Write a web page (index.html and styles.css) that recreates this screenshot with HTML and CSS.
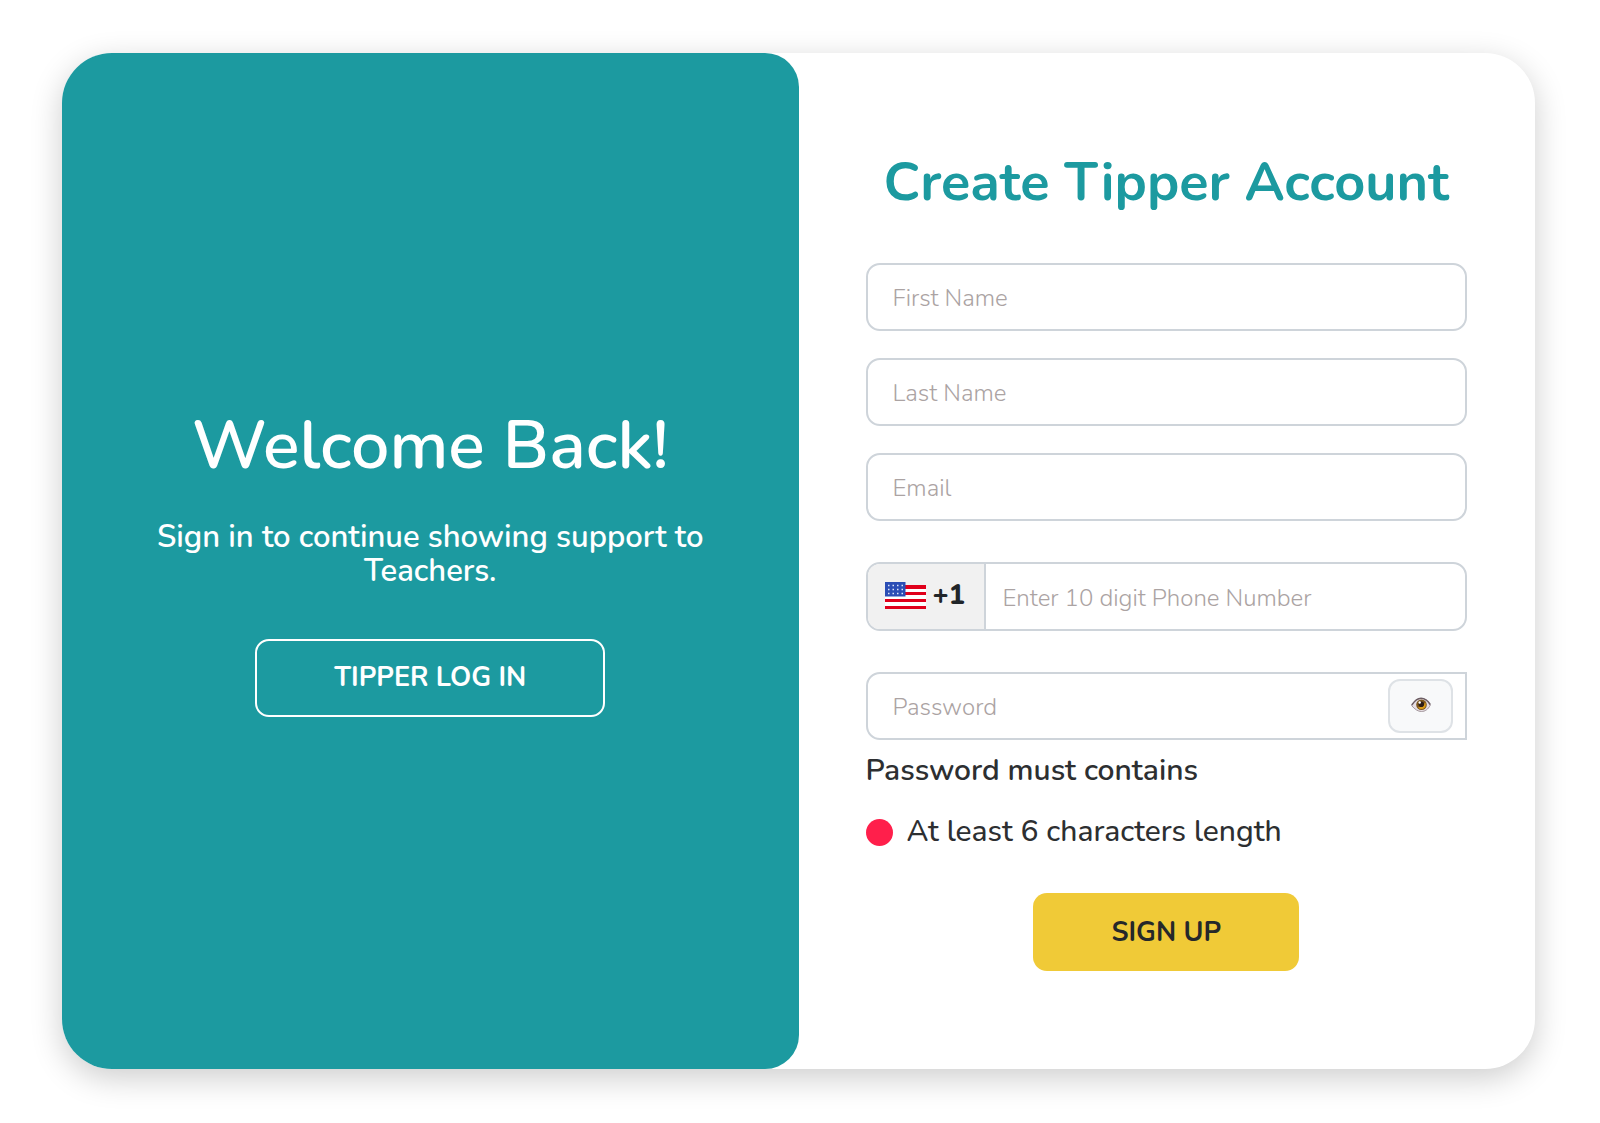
FILE: index.html
```html
<!DOCTYPE html>
<html lang="en">
<head>
<meta charset="utf-8">
<meta name="viewport" content="width=device-width, initial-scale=1">
<title>Create Tipper Account</title>
<link rel="stylesheet" href="styles.css">
</head>
<body>
<main class="card">
  <section class="welcome">
    <h1 class="welcome-title">Welcome Back!</h1>
    <p class="welcome-text">Sign in to continue showing support to Teachers.</p>
    <button class="button button-outline" type="button">TIPPER LOG IN</button>
  </section>
  <section class="signup">
    <h2 class="signup-title">Create Tipper Account</h2>
    <form class="form">
      <div class="names">
        <input class="field" type="text" placeholder="First Name" aria-label="First Name">
        <input class="field" type="text" placeholder="Last Name" aria-label="Last Name">
        <input class="field" type="email" placeholder="Email" aria-label="Email">
      </div>
      <div class="field-group phone">
        <label class="prefix" for="phone">
          <svg class="flag" viewBox="0 0 41 27" aria-hidden="true">
            <path fill="#fff" d="M0 0h41v27H0z"/>
            <path fill="#e0001b" d="M20 3h21v4H20zM20 10h21v3H20zM0 17h41v3H0zM0 24h41v3H0z"/>
            <path fill="#f1f1f1" d="M20 0h21v3H20z"/>
            <path fill="#2b4eb5" d="M0 0h20.500v14.500H0z"/>
            <g stroke="#dfe6fa" stroke-width="1.500" stroke-dasharray="1.500 3">
              <path d="M3 3.500h15M3 7.500h15M3 11.500h15"/>
            </g>
          </svg>
          <span>+1</span>
        </label>
        <input class="group-input" id="phone" type="tel" placeholder="Enter 10 digit Phone Number">
      </div>
      <div class="field-group password">
        <input class="group-input" type="password" placeholder="Password" aria-label="Password">
        <button class="reveal" type="button" aria-label="Show password">
          <svg class="eye" viewBox="0 0 20 16" aria-hidden="true">
            <path fill="#e6dee3" stroke="#a3969c" stroke-width="1" d="M.6 8.600C3.500 3.500 6.500 1.500 10 1.500s7 2 9.400 6.500C17 12.500 14 14.500 10.500 14.500S4 12.500.6 8.600z"/>
            <circle cx="10.500" cy="7.800" r="5.300" fill="#7d571d"/>
            <path fill="#d99a16" d="M7 10.500c2 2.400 6 2.200 7.500-1 .5-1.500.3-3-.3-4l-3 4z"/>
            <circle cx="10.300" cy="7.300" r="2.800" fill="#2c1c14"/>
            <circle cx="8.700" cy="5.500" r="1.200" fill="#fff"/>
            <path fill="none" stroke="#6d5e64" stroke-width="1.500" d="M.8 8C4 3.200 6.800 1.300 10 1.300s6.600 1.900 9.200 6.200"/>
          </svg>
        </button>
      </div>
      <p class="rules-title">Password must contains</p>
      <ul class="rules">
        <li class="rule"><span class="dot"></span>At least 6 characters length</li>
      </ul>
      <button class="button button-solid" type="submit">SIGN UP</button>
    </form>
  </section>
</main>
</body>
</html>
```
FILE: styles.css
```css
* { box-sizing: border-box; }

body {
  margin: 0;
  padding: 53px 65px 54px 62px;
  min-height: 100vh;
  display: flex;
  background: #fff;
  color: #2d2f31;
  font-family: Nunito, Lato, sans-serif;
}

h1, h2, p, ul { margin: 0; padding: 0; }
input, button { font: inherit; }

.card {
  flex: 1;
  display: grid;
  grid-template-columns: 1fr 1fr;
  border-radius: 50px;
  background: #fff;
  box-shadow: 0 9px 32px rgba(0, 0, 0, 0.2);
}

.welcome {
  display: flex;
  flex-direction: column;
  align-items: center;
  justify-content: center;
  padding: 0 68px 2px;
  border-radius: 50px 34px 34px 50px;
  background: #1c9aa0;
  color: #fff;
  text-align: center;
}

.welcome-title {
  font-size: 68px;
  line-height: 84px;
  font-weight: 600;
}

.welcome-text {
  margin: 32px 0 51px;
  font-size: 31px;
  line-height: 34px;
  font-weight: 600;
}

.button {
  height: 78px;
  border-radius: 14px;
  font-size: 27px;
  font-weight: 700;
  cursor: pointer;
}

.button-outline {
  width: 350px;
  border: 2px solid #fff;
  background: transparent;
  color: #fff;
}

.button-solid {
  align-self: center;
  width: 266px;
  margin-top: 42px;
  border: 0;
  background: #f0ca37;
  color: #25282a;
}

.signup {
  padding: 95px 68px 95px 67px;
}

.signup-title {
  color: #1c9aa0;
  font-size: 54px;
  line-height: 68px;
  font-weight: 700;
  text-align: center;
}

.form {
  display: flex;
  flex-direction: column;
  margin-top: 47px;
}

.names {
  display: grid;
  gap: 27px;
}

.field, .field-group {
  width: 100%;
  height: 68px;
  border: 2px solid #ced4da;
  border-radius: 14px;
  background: #fff;
  font-size: 24px;
}

.field { padding: 2px 25px 0; }

::placeholder { color: #aba3a3; opacity: 1; font-weight: 300; }

.field-group {
  display: flex;
  align-items: center;
  margin-top: 41px;
}

.group-input {
  flex: 1;
  min-width: 0;
  height: 100%;
  padding: 2px 17px 0;
  border: 0;
  background: transparent;
}

.phone { height: 69px; }

.prefix {
  display: flex;
  align-items: center;
  gap: 7px;
  width: 118px;
  height: 100%;
  padding: 0 0 3px 17px;
  border-right: 2px solid #ced4da;
  border-radius: 12px 0 0 12px;
  background: #f1f1f1;
  color: #212529;
  font-size: 27px;
  font-weight: 800;
}

.flag { width: 41px; height: 27px; }

.password {
  padding-right: 12px;
  border-radius: 14px 0 0 14px;
}

.password .group-input { padding-left: 25px; }

.reveal {
  display: grid;
  place-items: center;
  width: 65px;
  height: 54px;
  padding: 0 0 2px;
  border: 2px solid #dee2e6;
  border-radius: 12px;
  background: #f8f9fa;
}

.eye { width: 20px; height: 16px; }

.rules-title {
  margin-top: 12px;
  font-size: 30px;
  line-height: 38px;
  font-weight: 600;
}

.rules {
  margin-top: 23px;
  list-style: none;
}

.rule {
  display: flex;
  align-items: center;
  gap: 14px;
  font-size: 30px;
  line-height: 38px;
  font-weight: 500;
}

.dot {
  width: 27px;
  height: 27px;
  border-radius: 50%;
  background: #ff1f4b;
}
```
